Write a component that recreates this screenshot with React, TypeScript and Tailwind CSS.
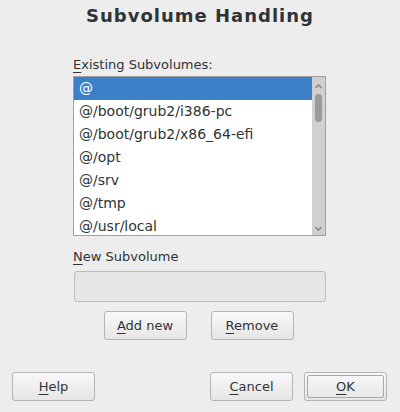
import React from "react";

const font = { fontFamily: '"DejaVu Sans", "Liberation Sans", sans-serif' };

function U({ children }: { children: React.ReactNode }) {
  return <span className="underline decoration-1 underline-offset-[3px]">{children}</span>;
}

function Btn({ children, focus = false }: { children: React.ReactNode; focus?: boolean }) {
  return (
    <div
      className={`w-[83px] h-[29px] rounded-[3px] border border-[#b4b4b4] bg-gradient-to-b from-[#f8f8f8] to-[#e6e6e6] flex items-center justify-center text-[13px] text-[#2e3436] ${
        focus ? "p-[2px]" : ""
      }`}
    >
      {focus ? (
        <div className="w-full h-full border border-[#a8a8a8] rounded-[2px] flex items-center justify-center">{children}</div>
      ) : (
        children
      )}
    </div>
  );
}

const rows = [
  "@",
  "@/boot/grub2/i386-pc",
  "@/boot/grub2/x86_64-efi",
  "@/opt",
  "@/srv",
  "@/tmp",
  "@/usr/local",
];

export default function App() {
  return (
    <div className="w-[400px] h-[412px] bg-[#ededed] text-[#2e3436] flex flex-col" style={font}>
      <div className="pt-[4px] text-center text-[18px] font-bold tracking-[1px] leading-[24px] text-[#2e3436]">
        Subvolume Handling
      </div>
      <div className="ml-[73px] w-[253px] flex flex-col">
        <div className="mt-[29px] text-[13px] leading-[16px]">
          <U>E</U>xisting Subvolumes:
        </div>
        <div className="mt-[3px] h-[160px] border border-[#a0a0a0] bg-white flex overflow-hidden">
          <div className="flex-1 flex flex-col">
            {rows.map((r, i) => (
              <div
                key={r}
                className={`h-[23px] shrink-0 pl-[5px] flex items-center text-[14px] ${
                  i === 0 ? "bg-[#3b80c9] text-white" : "text-[#2e3436]"
                }`}
              >
                {r}
              </div>
            ))}
          </div>
          <div className="w-[13px] bg-[#d0d0d0] flex flex-col items-center">
            <svg width="7" height="5" viewBox="0 0 7 5" className="mt-[7px]">
              <path d="M0.5 4 L3.5 1 L6.5 4" stroke="#8a8a8a" strokeWidth="1.6" fill="none" />
            </svg>
            <div className="mt-[5px] w-[7px] h-[28px] rounded-full bg-[#9a9a9a]" />
            <div className="flex-1" />
            <svg width="7" height="5" viewBox="0 0 7 5" className="mb-[4px]">
              <path d="M0.5 1 L3.5 4 L6.5 1" stroke="#8a8a8a" strokeWidth="1.6" fill="none" />
            </svg>
          </div>
        </div>
        <div className="mt-[13px] text-[13px] leading-[16px]">
          <U>N</U>ew Subvolume
        </div>
        <div className="mt-[6px] ml-[1px] h-[31px] rounded-[3px] border border-[#bcbcbc] bg-[#e6e6e6]" />
        <div className="mt-[9px] flex justify-center gap-[24px] -ml-[2px]">
          <Btn>
            <span>
              <U>A</U>dd new
            </span>
          </Btn>
          <Btn>
            <span>
              <U>R</U>emove
            </span>
          </Btn>
        </div>
      </div>
      <div className="mt-[32px] flex pl-[12px]">
        <Btn>
          <span>
            <U>H</U>elp
          </span>
        </Btn>
        <div className="ml-[115px]">
          <Btn>
            <span>
              <U>C</U>ancel
            </span>
          </Btn>
        </div>
        <div className="ml-[11px]">
          <Btn focus>
            <span>
              <U>O</U>K
            </span>
          </Btn>
        </div>
      </div>
    </div>
  );
}
